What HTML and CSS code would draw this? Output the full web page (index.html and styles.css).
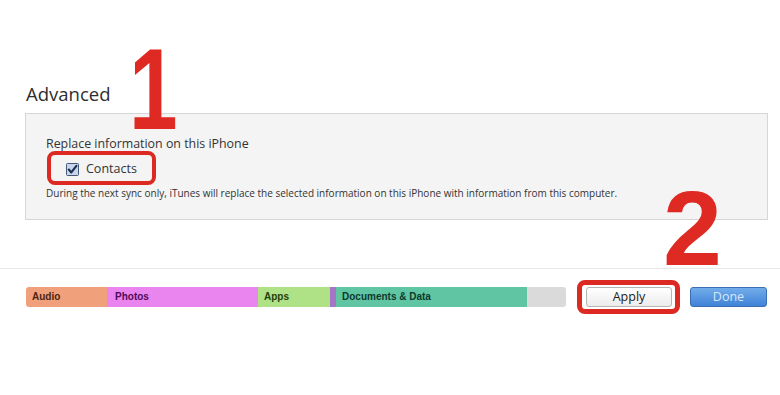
FILE: index.html
```html
<!DOCTYPE html>
<html lang="en">
<head>
  <meta charset="UTF-8">
  <title>Advanced - Replace information</title>
  <link rel="stylesheet" href="styles.css">
</head>
<body>

<div class="page">
  <!-- Advanced section -->
  <h2 class="section-title">Advanced</h2>
  <div class="panel">
    <p class="panel-label">Replace information on this iPhone</p>
    <label class="check-row">
      <svg class="checkbox" width="13" height="13" viewBox="0 0 13 13">
        <rect x="0.5" y="0.5" width="12" height="12" rx="1" fill="#c9d6ea" stroke="#44587a"/>
        <path d="M2.8 6.6 L5.3 9.4 L10.4 2.9" fill="none" stroke="#1d2f52" stroke-width="2.2" stroke-linecap="round" stroke-linejoin="round"/>
      </svg>
      <span>Contacts</span>
      <span class="ring ring-contacts"></span>
    </label>
    <p class="panel-note">During the next sync only, iTunes will replace the selected information on this iPhone with information from this computer.</p>
  </div>

  <!-- Step numbers -->
  <div class="step step-one">1</div>
  <div class="step step-two">2</div>

  <!-- Capacity bar and buttons -->
  <div class="footer-bar">
    <div class="capacity">
      <div class="seg seg-audio">Audio</div>
      <div class="seg seg-photos">Photos</div>
      <div class="seg seg-apps">Apps</div>
      <div class="seg seg-other"></div>
      <div class="seg seg-docs">Documents &amp; Data</div>
      <div class="seg seg-free"></div>
    </div>
    <div class="btn-wrap">
      <button class="btn btn-apply">Apply</button>
      <span class="ring ring-apply"></span>
    </div>
    <button class="btn btn-done">Done</button>
  </div>
</div>

</body>
</html>
```

FILE: styles.css
```css
body {
  margin: 0;
  background-color: #ffffff;
  font-family: 'Open Sans', 'Noto Sans', sans-serif;
  color: #333333;
}

.page {
  position: relative;
  width: 780px;
  height: 395px;
  padding-top: 82px;
  box-sizing: border-box;
}

.section-title {
  margin: 0 0 0 26px;
  font-size: 18.5px;
  font-weight: normal;
  color: #2e2e2e;
  line-height: 24px;
}

.panel {
  margin: 7px 12px 0 25px;
  height: 107px;
  box-sizing: border-box;
  background-color: #f4f4f4;
  border: 1px solid #d6d6d6;
  padding: 22px 0 0 20px;
}

.panel-label {
  margin: 0;
  font-size: 12.4px;
  line-height: 16px;
  color: #333333;
}

.check-row {
  position: relative;
  display: flex;
  align-items: center;
  gap: 7px;
  margin: 9px 0 0 20px;
  width: 90px;
  font-size: 12.5px;
  line-height: 16px;
  color: #333333;
}

.checkbox {
  display: block;
}

.panel-note {
  margin: 10px 0 0;
  font-size: 10px;
  line-height: 13px;
  color: #333333;
}

/* red highlight rings */
.ring {
  position: absolute;
  border: 4px solid #dc2a22;
  border-radius: 8px;
  box-sizing: border-box;
}

.ring-contacts {
  left: -19px;
  top: -10px;
  width: 109px;
  height: 34px;
}

.ring-apply {
  left: -9px;
  top: -7px;
  width: 103px;
  height: 34px;
  border-width: 5px;
}

/* big step numbers */
.step {
  position: absolute;
  font-family: 'Liberation Sans', Arial, sans-serif;
  font-weight: bold;
  color: #de2a22;
  line-height: 0.7;
  transform-origin: left top;
}

.step-one {
  left: 129px;
  top: 49px;
  font-size: 115px;
  transform: scaleX(0.76);
}

.step-two {
  left: 663px;
  top: 191px;
  font-size: 106px;
}

.footer-bar {
  margin-top: 48px;
  border-top: 1px solid #e8e8e8;
  padding: 18px 0 0 26px;
  display: flex;
  align-items: center;
}

.capacity {
  display: flex;
  width: 540px;
  height: 20px;
  border-radius: 3px;
  overflow: hidden;
}

.seg {
  height: 20px;
  line-height: 20px;
  font-family: 'Liberation Sans', Arial, sans-serif;
  font-size: 10px;
  font-weight: bold;
  padding-left: 6px;
  box-sizing: border-box;
  white-space: nowrap;
}

.seg-audio {
  width: 81px;
  background-color: #f0a17c;
  color: #4e2410;
}

.seg-photos {
  width: 151px;
  background-color: #ea84ef;
  color: #4f0c58;
  padding-left: 8px;
}

.seg-apps {
  width: 72px;
  background-color: #afe187;
  color: #24420c;
}

.seg-other {
  width: 6px;
  padding: 0;
  background-color: #a675c4;
}

.seg-docs {
  width: 191px;
  background-color: #60c5a2;
  color: #0d3a2c;
}

.seg-free {
  width: 39px;
  padding: 0;
  background-color: #dadada;
}

.btn-wrap {
  position: relative;
  margin-left: 20px;
}

.btn {
  display: block;
  height: 20px;
  border-radius: 3px;
  font-family: 'Open Sans', 'Noto Sans', sans-serif;
  font-size: 12.5px;
  line-height: 18px;
  padding: 0;
  box-sizing: border-box;
}

.btn-apply {
  width: 86px;
  background: linear-gradient(#ffffff, #ececec);
  border: 1px solid #b5b5b5;
  color: #222222;
}

.btn-done {
  width: 77px;
  margin-left: 18px;
  background: linear-gradient(#72acea, #3f82d6);
  border: 1px solid #3a6db3;
  color: #d8e7f8;
}
```
